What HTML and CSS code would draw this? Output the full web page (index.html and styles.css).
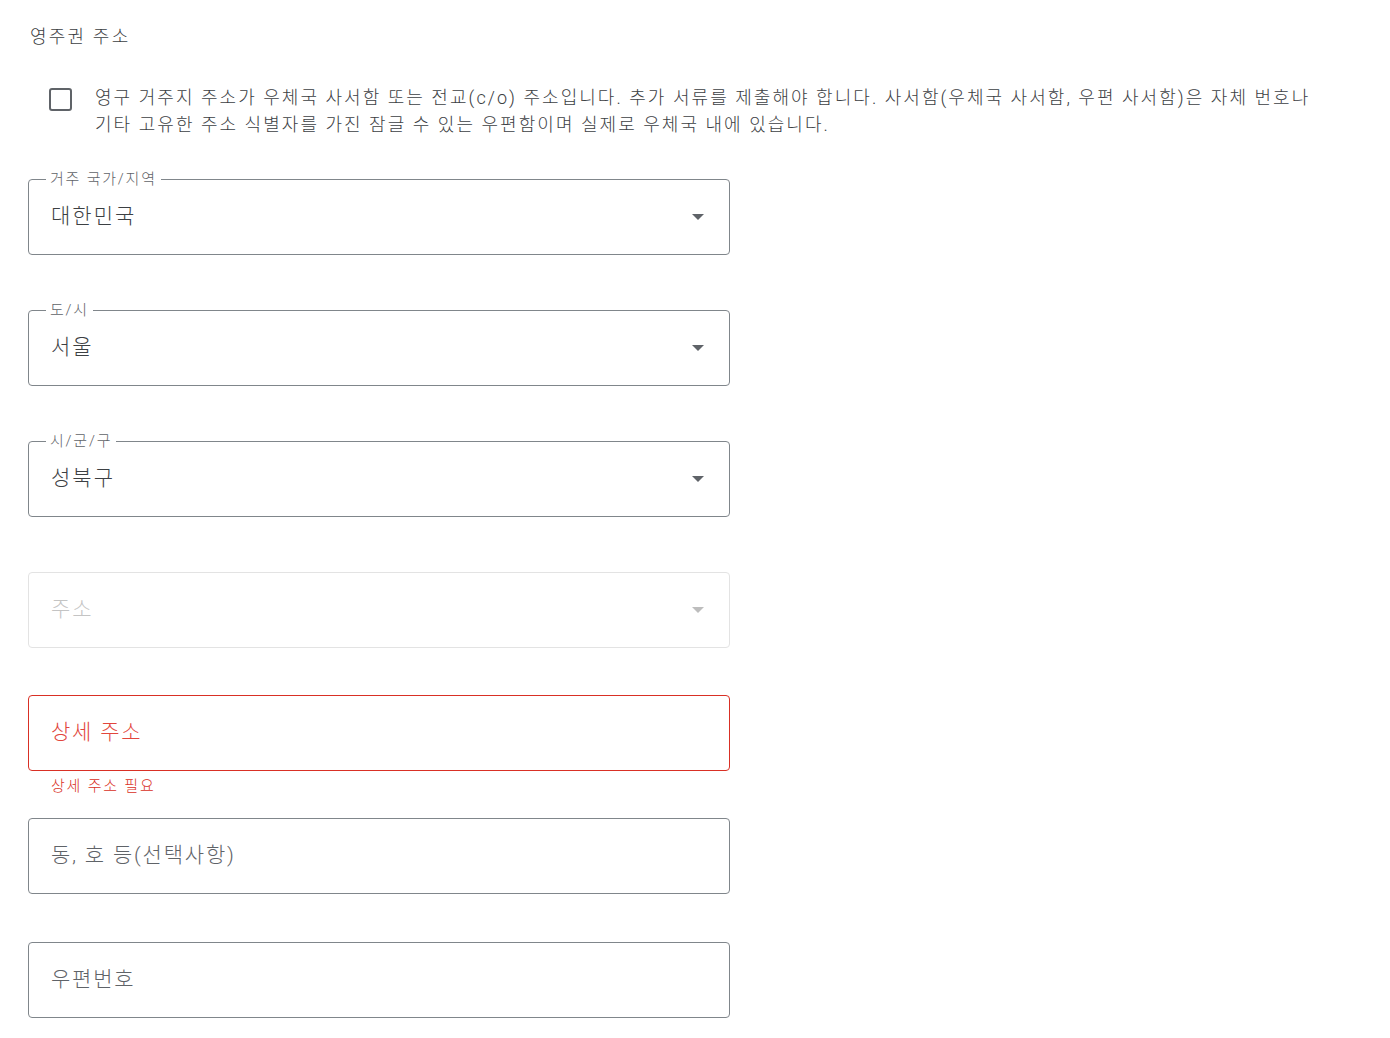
FILE: index.html
```html
<!DOCTYPE html>
<html lang="ko">
<head>
    <meta charset="UTF-8">
    <meta name="viewport" content="width=device-width, initial-scale=1.0">
    <title>영주권 주소</title>
    <link rel="stylesheet" href="styles.css">
</head>
<body>
    <main class="page">
        <h2 class="section-title">영주권 주소</h2>

        <label class="po-box">
            <span class="checkbox"></span>
            <span class="po-text">영구 거주지 주소가 우체국 사서함 또는 전교(c/o) 주소입니다. 추가 서류를 제출해야 합니다. 사서함(우체국 사서함, 우편 사서함)은 자체 번호나 기타 고유한 주소 식별자를 가진 잠글 수 있는 우편함이며 실제로 우체국 내에 있습니다.</span>
        </label>

        <div class="field field-select first">
            <span class="field-label">거주 국가/지역</span>
            <span class="field-value">대한민국</span>
            <span class="arrow"></span>
        </div>

        <div class="field field-select">
            <span class="field-label">도/시</span>
            <span class="field-value">서울</span>
            <span class="arrow"></span>
        </div>

        <div class="field field-select">
            <span class="field-label">시/군/구</span>
            <span class="field-value">성북구</span>
            <span class="arrow"></span>
        </div>

        <div class="field field-select disabled">
            <span class="field-value">주소</span>
            <span class="arrow"></span>
        </div>

        <div class="field error">
            <input type="text" placeholder="상세 주소">
        </div>
        <p class="error-text">상세 주소 필요</p>

        <div class="field after-error">
            <input type="text" placeholder="동, 호 등(선택사항)">
        </div>

        <div class="field">
            <input type="text" placeholder="우편번호">
        </div>
    </main>
</body>
</html>
```

FILE: styles.css
```css
body {
    margin: 0;
    font-family: Roboto, "Noto Sans CJK KR", sans-serif;
    font-weight: 300;
    color: #3c4043;
    background-color: #fff;
}
.page {
    padding: 25px 28px 20px;
}
.section-title {
    margin: 0 0 0 2px;
    font-size: 18px;
    font-weight: 300;
    line-height: 24px;
    letter-spacing: 2.2px;
}
.po-box {
    display: flex;
    align-items: flex-start;
    margin-top: 35px;
    padding-left: 21px;
    width: 1270px;
    cursor: pointer;
}
.checkbox {
    flex: none;
    width: 23px;
    height: 23px;
    box-sizing: border-box;
    border: 2px solid #5f6368;
    border-radius: 3px;
    margin-top: 4px;
}
.po-text {
    max-width: 1220px;
    margin-left: 23px;
    font-size: 18px;
    line-height: 27px;
    letter-spacing: 2.05px;
}
.field {
    position: relative;
    display: flex;
    align-items: center;
    width: 702px;
    height: 76px;
    box-sizing: border-box;
    margin-top: 55px;
    padding: 0 25px 2px 22px;
    border: 1px solid #80868b;
    border-radius: 4px;
}
.field.first {
    margin-top: 41px;
}
.field.disabled + .field {
    margin-top: 47px;
}
.field-label {
    position: absolute;
    top: -11px;
    left: 17px;
    padding: 0 4px;
    background: #fff;
    font-size: 15px;
    line-height: 20px;
    letter-spacing: 1.8px;
    color: #5f6368;
}
.field-value {
    flex: 1;
    margin-bottom: 4px;
    font-size: 21px;
    letter-spacing: 2px;
    color: #3c4043;
}
.arrow {
    width: 0;
    height: 0;
    margin-top: 2px;
    border-left: 6px solid transparent;
    border-right: 6px solid transparent;
    border-top: 6px solid #5f6368;
}
.field.disabled {
    border-color: #e3e3e3;
}
.field.disabled .field-value {
    color: #c4c4c4;
}
.field.disabled .arrow {
    border-top-color: #bdbdbd;
}
.field input {
    width: 100%;
    border: none;
    outline: none;
    padding: 0;
    font-family: inherit;
    font-weight: 300;
    font-size: 21px;
    letter-spacing: 1.8px;
    color: #3c4043;
    background: transparent;
}
.field input::placeholder {
    color: #5f6368;
}
.field.error {
    border-color: #d93025;
}
.field.error input::placeholder {
    color: #e2463c;
}
.error-text {
    margin: 5px 0 0 23px;
    font-size: 15px;
    line-height: 20px;
    letter-spacing: 1.8px;
    color: #d93025;
}
.field.after-error {
    margin-top: 22px;
}
.field.after-error + .field {
    margin-top: 48px;
}
```
